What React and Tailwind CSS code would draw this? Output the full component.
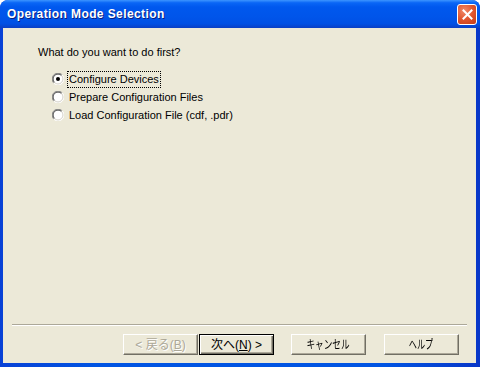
import React from "react";

function Radio({ checked }) {
  return (
    <svg width="12" height="12" viewBox="0 0 12 12" className="shrink-0">
      <circle cx="6" cy="6" r="5.5" fill="#ffffff" />
      <path d="M10.2 1.8 A5.5 5.5 0 0 0 1.8 10.2" fill="none" stroke="#8a8a8a" strokeWidth="1" />
      <path d="M9.5 2.5 A4.5 4.5 0 0 0 2.5 9.5" fill="none" stroke="#404040" strokeWidth="1" />
      <path d="M1.8 10.2 A5.5 5.5 0 0 0 10.2 1.8" fill="none" stroke="#ffffff" strokeWidth="1" />
      <path d="M2.5 9.5 A4.5 4.5 0 0 0 9.5 2.5" fill="none" stroke="#d4d0c8" strokeWidth="1" />
      {checked && <circle cx="6" cy="6" r="2" fill="#000000" />}
    </svg>
  );
}

function Btn({ children, disabled, def, className = "" }) {
  return (
    <div
      className={
        "w-[75px] h-[21px] flex items-center justify-center text-[12px] leading-none " +
        (def
          ? "border border-black shadow-[inset_1px_1px_#ffffff,inset_-1px_-1px_#716f64,inset_-2px_-2px_#aca899] "
          : "border-t border-l border-t-white border-l-white border-r border-b border-r-[#716f64] border-b-[#716f64] shadow-[inset_-1px_-1px_#aca899] ") +
        (disabled ? "text-[#aca899] [text-shadow:1px_1px_#ffffff] " : "text-black ") +
        "bg-[#ece9d8] " +
        className
      }
      style={{ fontFamily: '"Liberation Sans", "Noto Sans CJK JP", sans-serif' }}
    >
      {children}
    </div>
  );
}

export default function App() {
  const ui = { fontFamily: '"Liberation Sans", "Noto Sans CJK JP", sans-serif' };
  return (
    <div className="w-[480px] h-[367px] flex flex-col rounded-t-[8px] overflow-hidden bg-[linear-gradient(90deg,#0841d6,#0054e3_20%,#0054e3_80%,#0836c8)]">
      <div className="h-[28px] shrink-0 flex items-center pl-[7px] pr-[3px] bg-[linear-gradient(180deg,#3d95ff_0%,#0a66f6_10%,#0058ee_25%,#0055ea_60%,#0050e4_85%,#0a3fc4_100%)]">
        <div
          className="flex-1 text-white font-bold text-[12px] tracking-[0.4px] [text-shadow:1px_1px_#0a1e80]"
          style={{ fontFamily: '"Liberation Sans", sans-serif' }}
        >
          Operation Mode Selection
        </div>
        <div className="w-[20px] h-[21px] rounded-[3px] border border-white flex items-center justify-center bg-[radial-gradient(circle_at_35%_30%,#f08a6a,#e0552e_50%,#c33a14)]">
          <svg width="11" height="11" viewBox="0 0 11 11">
            <path d="M1.5 1.5 L9.5 9.5 M9.5 1.5 L1.5 9.5" stroke="#ffffff" strokeWidth="2" strokeLinecap="square" />
          </svg>
        </div>
      </div>
      <div className="flex-1 flex flex-col bg-[#ece9d8] ml-[3px] mr-[4px] mb-[4px]" style={ui}>
        <div className="pt-[17px] pl-[35px] text-[11px] leading-[14px] text-black">
          What do you want to do first?
        </div>
        <div className="mt-[11px] pl-[49px] flex flex-col text-[11px] text-black">
          <div className="h-[18px] flex items-center">
            <Radio checked />
            <span className="ml-[3px] px-[1px] leading-[15px] border border-dotted border-black">Configure Devices</span>
          </div>
          <div className="h-[18px] flex items-center">
            <Radio />
            <span className="ml-[4px] px-[1px] leading-[15px]">Prepare Configuration Files</span>
          </div>
          <div className="h-[18px] flex items-center">
            <Radio />
            <span className="ml-[4px] px-[1px] leading-[15px]">Load Configuration File (cdf, .pdr)</span>
          </div>
        </div>
        <div className="flex-1" />
        <div className="mx-[9px] h-[2px] border-t border-t-[#aca899] border-b border-b-white" />
        <div className="mt-[8px] mb-[8px] flex justify-end pr-[17px]">
          <Btn disabled>&lt; 戻る(<span className="underline">B</span>)</Btn>
          <Btn def className="ml-[1px]">次へ(<span className="underline">N</span>) &gt;</Btn>
          <Btn className="ml-[17px]">
            <span className="inline-block scale-x-[0.72] text-[12px]">キャンセル</span>
          </Btn>
          <Btn className="ml-[18px]">
            <span className="inline-block scale-x-[0.68] text-[12px]">ヘルプ</span>
          </Btn>
        </div>
      </div>
    </div>
  );
}
